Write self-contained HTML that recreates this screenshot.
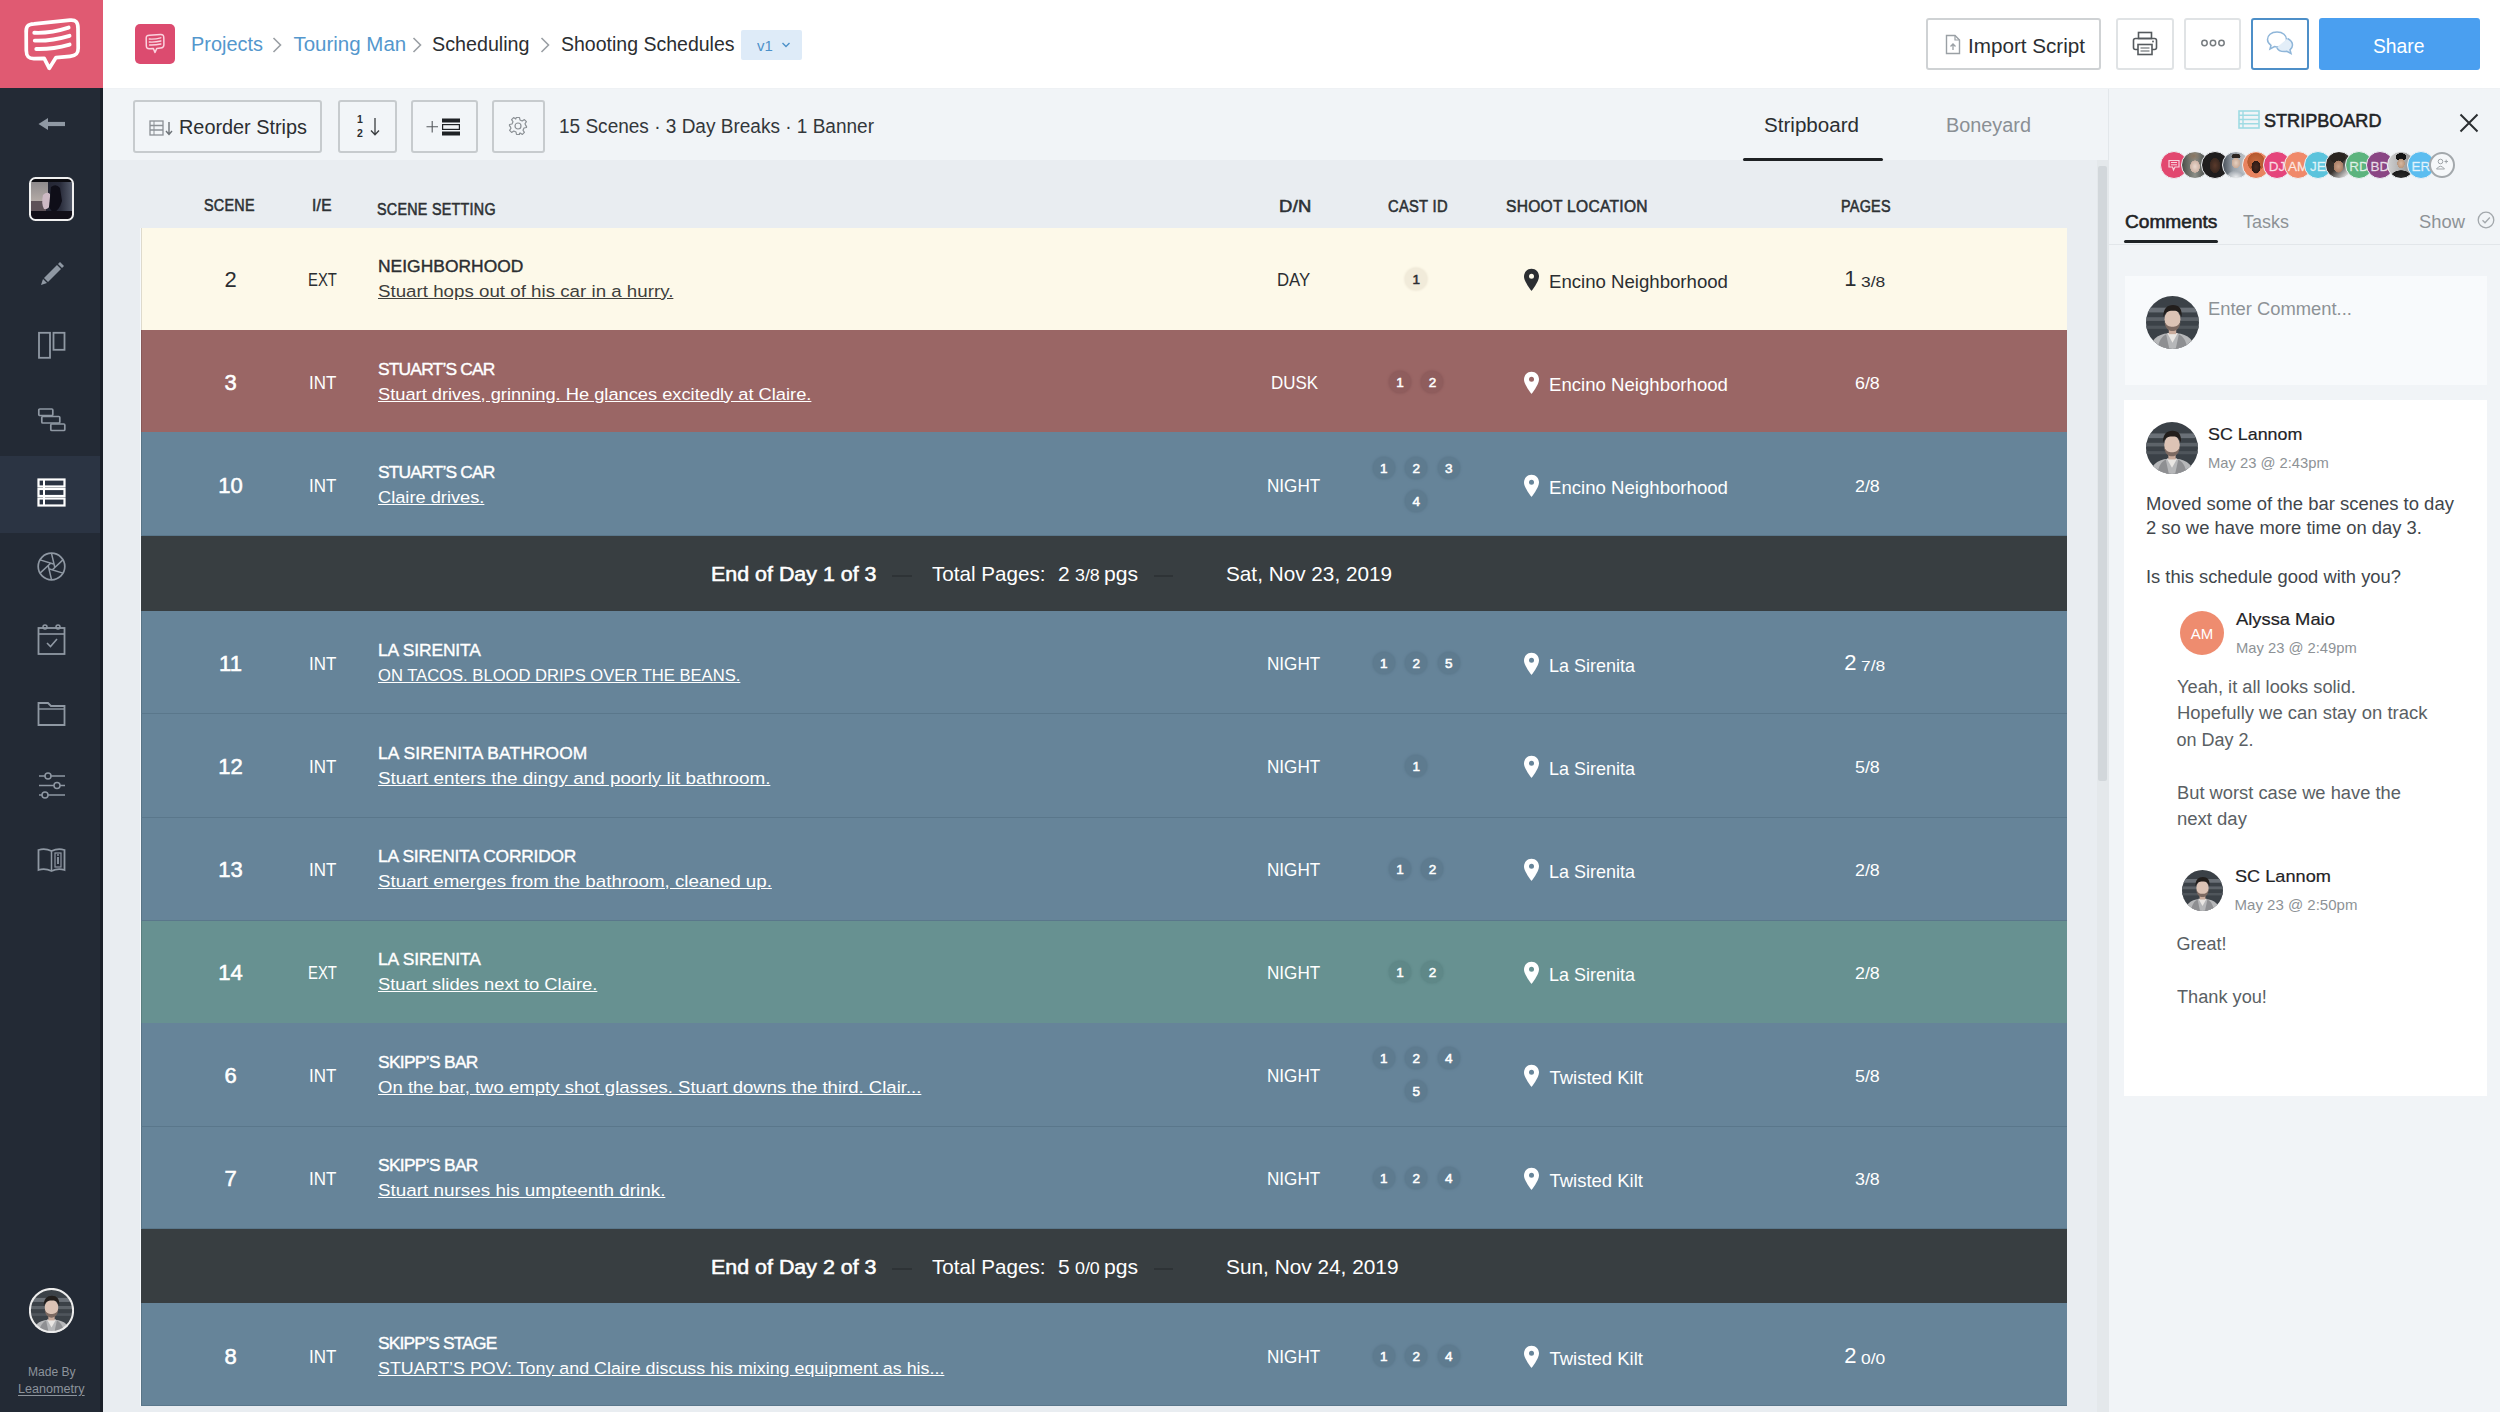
<!DOCTYPE html>
<html><head><meta charset="utf-8"><title>Stripboard</title>
<style>
html,body{margin:0;padding:0;width:2500px;height:1412px;overflow:hidden;font-family:"Liberation Sans", sans-serif;}
body{position:relative;}
</style></head><body>
<div style="position:absolute;left:0px;top:0px;width:2500px;height:1412px;background:#e9edf1"></div>
<div style="position:absolute;left:103px;top:0px;width:2397px;height:88px;background:#ffffff"></div>
<div style="position:absolute;left:103px;top:88px;width:2006px;height:72px;background:#f1f4f7"></div>
<div style="position:absolute;left:2109px;top:88px;width:391px;height:1324px;background:#f1f4f7"></div>
<div style="position:absolute;left:2108px;top:88px;width:1px;height:1324px;background:#e3e7eb"></div>
<div style="position:absolute;left:103px;top:88px;width:2397px;height:1px;background:#eef1f4"></div>
<div style="position:absolute;left:0px;top:0px;width:103px;height:1412px;background:#232a35"></div>
<div style="position:absolute;left:100px;top:88px;width:3px;height:1324px;background:#1b2029"></div>
<div style="position:absolute;left:0px;top:0px;width:103px;height:88px;background:#e05a72"></div>
<div style="position:absolute;left:0px;top:456px;width:100px;height:77px;background:#2b3443"></div>
<svg style="position:absolute;left:0px;top:0px" width="103" height="88" viewBox="0 0 103 88">
<path d="M26.2 33 C25.8 26.5 27.5 24.3 34 23.8 L70 20.2 C76 19.7 78 22.3 78 28.5 L78.2 48 C78.3 53.8 76 55.8 70 56.4 L56 57.6 L49.3 68.3 L44.2 58.4 L34 58.6 C28.2 58.7 26.4 56.2 26.3 50.5 Z" fill="none" stroke="#fff" stroke-width="3.7" stroke-linejoin="round"/>
<path d="M34.3 32.8 Q50 33.6 68.6 27.6" stroke="#fff" stroke-width="3.9" fill="none" stroke-linecap="round"/>
<path d="M34.8 40.6 Q51 41.2 69.5 35.8" stroke="#fff" stroke-width="3.9" fill="none" stroke-linecap="round"/>
<path d="M36.3 49 Q52 49.5 69.6 44.6" stroke="#fff" stroke-width="3.9" fill="none" stroke-linecap="round"/>
</svg>
<svg style="position:absolute;left:36px;top:114px" width="32" height="20" viewBox="0 0 32 20">
<path d="M29 10 L10 10" stroke="#8f98a3" stroke-width="4.2"/><path d="M12 4 L2.5 10 L12 16 Z" fill="#8f98a3"/></svg>
<svg style="position:absolute;left:29px;top:177px" width="45" height="44" viewBox="0 0 45 44">
<defs><clipPath id="thc"><rect x="2" y="2" width="41" height="40" rx="4"/></clipPath>
<linearGradient id="thr" x1="0" x2="1" y1="0" y2="0"><stop offset="0" stop-color="#1b1a26"/><stop offset="0.7" stop-color="#2a2d3c"/><stop offset="1" stop-color="#5b6272"/></linearGradient>
<linearGradient id="thl" x1="0" x2="0" y1="0" y2="1"><stop offset="0" stop-color="#8e8a8c"/><stop offset="1" stop-color="#b3aaa6"/></linearGradient></defs>
<g clip-path="url(#thc)">
<rect width="45" height="44" fill="url(#thr)"/>
<rect x="0" y="5" width="19" height="19" fill="url(#thl)"/>
<rect x="0" y="24" width="17" height="10" fill="#5e5258"/>
<path d="M14 18 Q18 14 21 17 L22 26 Q20 33 15 32 Q12 27 14 18 Z" fill="#cdb9c4"/>
<path d="M22 10 Q27 6 31 11 L33 24 Q30 34 24 36 L20 30 Z" fill="#0f0e18"/>
<rect x="0" y="34" width="45" height="10" fill="#120f18"/>
<rect x="0" y="2" width="45" height="3" fill="#0b0b10"/>
</g>
<rect x="1" y="1" width="43" height="42" rx="5.5" fill="none" stroke="#f0f0f0" stroke-width="2"/>
</svg>
<svg style="position:absolute;left:38px;top:259px" width="28" height="28" viewBox="0 0 28 28">
<path d="M6 19 L19 6 L23 10 L10 23 Z" fill="#8f98a3"/><path d="M20 5 L22 3 L26 7 L24 9 Z" fill="#8f98a3"/><path d="M5 20 L9 24 L3 26 Z" fill="#8f98a3"/></svg>
<svg style="position:absolute;left:37px;top:331px" width="30" height="29" viewBox="0 0 30 29">
<rect x="2" y="1.8" width="11" height="25" fill="none" stroke="#8f98a3" stroke-width="1.8"/><rect x="16.5" y="1.8" width="11" height="17" fill="none" stroke="#8f98a3" stroke-width="1.8"/></svg>
<svg style="position:absolute;left:37px;top:407px" width="30" height="26" viewBox="0 0 30 26">
<rect x="1.8" y="2" width="14" height="6.5" rx="1" fill="none" stroke="#8f98a3" stroke-width="1.7"/><rect x="4.8" y="9.5" width="18" height="6.5" rx="1" fill="none" stroke="#8f98a3" stroke-width="1.7"/><rect x="13.8" y="17" width="14" height="6.5" rx="1" fill="none" stroke="#8f98a3" stroke-width="1.7"/></svg>
<svg style="position:absolute;left:37px;top:478px" width="29" height="29" viewBox="0 0 29 29">
<rect x="1.5" y="1.5" width="26" height="7" fill="none" stroke="#fff" stroke-width="2.2"/><rect x="1.5" y="11" width="26" height="7" fill="none" stroke="#fff" stroke-width="2.2"/><rect x="1.5" y="20.5" width="26" height="7" fill="none" stroke="#fff" stroke-width="2.2"/>
<path d="M7 2 V28" stroke="#fff" stroke-width="2"/></svg>
<svg style="position:absolute;left:36px;top:551px" width="31" height="31" viewBox="0 0 31 31">
<circle cx="15.5" cy="15.5" r="13.3" fill="none" stroke="#8f98a3" stroke-width="1.7"/>
<path d="M15.50 2.30 L18.88 16.73 M26.93 8.90 L16.13 19.05 M26.93 22.10 L12.74 17.81 M15.50 28.70 L12.12 14.27 M4.07 22.10 L14.87 11.95 M4.07 8.90 L18.26 13.19" stroke="#8f98a3" stroke-width="1.5" fill="none"/></svg>
<svg style="position:absolute;left:37px;top:623px" width="30" height="33" viewBox="0 0 30 33">
<rect x="1.5" y="5" width="26" height="26" fill="none" stroke="#8f98a3" stroke-width="1.8"/><path d="M1.5 11 H27.5" stroke="#8f98a3" stroke-width="1.6"/>
<circle cx="8" cy="4" r="2" fill="none" stroke="#8f98a3" stroke-width="1.5"/><circle cx="21" cy="4" r="2" fill="none" stroke="#8f98a3" stroke-width="1.5"/>
<path d="M10 20 L13.5 23.5 L20 16" stroke="#8f98a3" stroke-width="1.6" fill="none"/></svg>
<svg style="position:absolute;left:37px;top:700px" width="30" height="28" viewBox="0 0 30 28">
<path d="M1.5 3 H11 L14 6 H27.5 V25 H1.5 Z" fill="none" stroke="#8f98a3" stroke-width="1.8"/><path d="M1.5 9 H27.5" stroke="#8f98a3" stroke-width="1.4"/></svg>
<svg style="position:absolute;left:37px;top:772px" width="30" height="29" viewBox="0 0 30 29">
<path d="M2 4 H28 M2 13.5 H28 M2 23 H28" stroke="#8f98a3" stroke-width="1.6"/>
<circle cx="11" cy="4" r="3" fill="#232a35" stroke="#8f98a3" stroke-width="1.5"/><circle cx="20" cy="13.5" r="3" fill="#232a35" stroke="#8f98a3" stroke-width="1.5"/><circle cx="8" cy="23" r="3" fill="#232a35" stroke="#8f98a3" stroke-width="1.5"/></svg>
<svg style="position:absolute;left:37px;top:847px" width="30" height="27" viewBox="0 0 30 27">
<path d="M1.5 3 Q8 1 14.5 4 Q21 1 27.5 3 V23 Q21 21 14.5 24 Q8 21 1.5 23 Z" fill="none" stroke="#8f98a3" stroke-width="1.8"/><path d="M14.5 4 V24" stroke="#8f98a3" stroke-width="1.5"/>
<rect x="18" y="6" width="6" height="14" fill="none" stroke="#8f98a3" stroke-width="1.2"/><path d="M21 10 V17" stroke="#8f98a3" stroke-width="1.8"/><circle cx="21" cy="8" r="0.9" fill="#8f98a3"/></svg>
<svg style="position:absolute;left:29px;top:1288px" width="45" height="45" viewBox="0 0 100 100">
<defs><clipPath id="fc1"><circle cx="50" cy="50" r="50"/></clipPath></defs>
<g clip-path="url(#fc1)">
<rect width="100" height="100" fill="#3b4147"/>
<rect x="0" y="22" width="100" height="9" fill="#6a7077"/><rect x="0" y="40" width="100" height="7" fill="#5d6369"/><rect x="0" y="56" width="100" height="6" fill="#4f555b"/>
<path d="M8 100 C10 78 28 70 50 70 C72 70 90 78 92 100 Z" fill="#b6b7b9"/>
<path d="M40 70 L50 88 L60 70 Z" fill="#e9e6e3"/>
<path d="M22 100 C24 84 30 76 38 72 L44 100 Z" fill="#8e8f92"/><path d="M78 100 C76 84 70 76 62 72 L56 100 Z" fill="#8e8f92"/>
<rect x="43" y="58" width="14" height="14" fill="#c9ab9c"/>
<ellipse cx="50" cy="44" rx="15" ry="19" fill="#dcc3b5"/>
<path d="M35 48 C36 60 42 66 50 66 C58 66 64 60 65 48 C62 56 56 58 50 58 C44 58 38 56 35 48 Z" fill="#7d6a62"/>
<path d="M33 40 C32 24 40 17 51 17 C62 17 69 24 67 40 C64 30 58 27 50 28 C42 28 36 31 33 40 Z" fill="#221e1c"/>
</g>
<circle cx="50" cy="50" r="48" fill="none" stroke="#ececec" stroke-width="4.44"/>
</svg>
<div style="position:absolute;left:27.6px;top:1366.4px;font-size:12.5px;line-height:12.5px;font-weight:400;color:#8d949c;white-space:pre;transform:scaleX(0.9652);transform-origin:0 0;">Made By</div>
<div style="position:absolute;left:17.6px;top:1382.9px;font-size:12.5px;line-height:12.5px;font-weight:400;color:#8d949c;white-space:pre;transform:scaleX(1.0092);transform-origin:0 0;text-decoration:underline;text-underline-offset:2px;">Leanometry</div>
<div style="position:absolute;left:135px;top:24px;width:40px;height:40px;background:#dc4b6f;border-radius:5px"></div>
<svg style="position:absolute;left:143px;top:32px" width="24" height="24" viewBox="0 0 24 24">
<path d="M3.2 6.5 C3 4 4 3.3 6.5 3.2 L17.5 2.6 C20 2.5 20.8 3.5 20.8 6 L20.9 12.5 C21 15 20 15.8 17.5 16 L13.8 16.4 L12 20.5 L10.4 16.6 L6.5 16.7 C4 16.8 3.3 15.8 3.3 13.5 Z" fill="none" stroke="#fbd3df" stroke-width="1.5" stroke-linejoin="round"/>
<path d="M6.3 7 Q12 7.4 17.8 5.8 M6.3 10 Q12 10.4 17.9 9 M6.6 13 Q12 13.3 17.9 12" stroke="#fbd3df" stroke-width="1.4" fill="none" stroke-linecap="round"/></svg>
<div style="position:absolute;left:190.9px;top:34.3px;font-size:20.5px;line-height:20.5px;font-weight:400;color:#5497cd;white-space:pre;transform:scaleX(0.9711);transform-origin:0 0;">Projects</div>
<div style="position:absolute;left:293.4px;top:34.3px;font-size:20.5px;line-height:20.5px;font-weight:400;color:#5497cd;white-space:pre;">Touring Man</div>
<div style="position:absolute;left:432.4px;top:34.3px;font-size:20.5px;line-height:20.5px;font-weight:400;color:#2b2e31;white-space:pre;transform:scaleX(0.9613);transform-origin:0 0;">Scheduling</div>
<div style="position:absolute;left:560.9px;top:34.3px;font-size:20.5px;line-height:20.5px;font-weight:400;color:#2b2e31;white-space:pre;transform:scaleX(0.9516);transform-origin:0 0;">Shooting Schedules</div>
<svg style="position:absolute;left:271px;top:36px" width="12" height="18" viewBox="0 0 12 18"><path d="M2.5 2 L9.5 9 L2.5 16" stroke="#9a9fa4" stroke-width="1.6" fill="none"/></svg>
<svg style="position:absolute;left:411px;top:36px" width="12" height="18" viewBox="0 0 12 18"><path d="M2.5 2 L9.5 9 L2.5 16" stroke="#9a9fa4" stroke-width="1.6" fill="none"/></svg>
<svg style="position:absolute;left:539px;top:36px" width="12" height="18" viewBox="0 0 12 18"><path d="M2.5 2 L9.5 9 L2.5 16" stroke="#9a9fa4" stroke-width="1.6" fill="none"/></svg>
<div style="position:absolute;left:741px;top:30px;width:61px;height:30px;background:#deebf8;border-radius:2px"></div>
<div style="position:absolute;left:756.5px;top:38.3px;font-size:15px;line-height:15px;font-weight:400;color:#4d91c9;white-space:pre;transform:scaleX(0.9941);transform-origin:0 0;">v1</div>
<svg style="position:absolute;left:781px;top:41px" width="10" height="8" viewBox="0 0 10 8"><path d="M1.5 2 L5 5.5 L8.5 2" stroke="#4d91c9" stroke-width="1.4" fill="none"/></svg>
<div style="position:absolute;left:1926px;top:18px;width:175px;height:52px;box-sizing:border-box;border:2px solid #d4d7d9;border-radius:3px;background:#fff;border-color:#cfd2d4"></div>
<svg style="position:absolute;left:1945px;top:34px" width="16" height="21" viewBox="0 0 16 21">
<path d="M1.5 1.5 H10 L14.5 6 V19.5 H1.5 Z" fill="none" stroke="#9aa0a5" stroke-width="1.4"/><path d="M10 1.5 V6 H14.5" fill="none" stroke="#9aa0a5" stroke-width="1.2"/>
<path d="M8 16 V10 M5.5 12.5 L8 10 L10.5 12.5" stroke="#9aa0a5" stroke-width="1.3" fill="none"/></svg>
<div style="position:absolute;left:1968.4px;top:35.2px;font-size:21px;line-height:21px;font-weight:400;color:#2b2e31;white-space:pre;transform:scaleX(0.9834);transform-origin:0 0;">Import Script</div>
<div style="position:absolute;left:2116px;top:18px;width:58px;height:52px;box-sizing:border-box;border:2px solid #d4d7d9;border-radius:3px;background:#fff;border-color:#e0e3e5"></div>
<svg style="position:absolute;left:2132px;top:31px" width="26" height="26" viewBox="0 0 26 26">
<rect x="6.5" y="1.5" width="13" height="6" fill="none" stroke="#555a5e" stroke-width="1.6"/><rect x="1.5" y="7.5" width="23" height="11" rx="2" fill="none" stroke="#555a5e" stroke-width="1.6"/>
<rect x="6" y="13.5" width="14" height="10" fill="#fff" stroke="#555a5e" stroke-width="1.6"/><path d="M8.5 17 H17.5 M8.5 20 H17.5" stroke="#555a5e" stroke-width="1.2"/><circle cx="21" cy="10.5" r="0.9" fill="#555a5e"/></svg>
<div style="position:absolute;left:2184px;top:18px;width:57px;height:52px;box-sizing:border-box;border:2px solid #d4d7d9;border-radius:3px;background:#fff;border-color:#e0e3e5"></div>
<svg style="position:absolute;left:2201px;top:38px" width="24" height="10" viewBox="0 0 24 10">
<circle cx="3.5" cy="5" r="2.7" fill="none" stroke="#777c80" stroke-width="1.5"/><circle cx="12" cy="5" r="2.7" fill="none" stroke="#777c80" stroke-width="1.5"/><circle cx="20.5" cy="5" r="2.7" fill="none" stroke="#777c80" stroke-width="1.5"/></svg>
<div style="position:absolute;left:2251px;top:18px;width:58px;height:52px;box-sizing:border-box;border:2px solid #4d8fc8;border-radius:3px;background:#fff;"></div>
<svg style="position:absolute;left:2266px;top:30px" width="28" height="26" viewBox="0 0 28 26">
<path d="M11 2 C5 2 1.5 5.5 1.5 9.5 C1.5 12 3 14 5 15.3 L4 19 L8.5 16.6 C9.3 16.8 10.1 16.9 11 16.9 C17 16.9 20.5 13.4 20.5 9.5 C20.5 5.5 17 2 11 2 Z" fill="none" stroke="#8fb6d9" stroke-width="1.5"/>
<path d="M21.5 8.5 C24.5 10 26.5 12.3 26.5 15 C26.5 17 25.5 18.6 24 19.8 L25 23.5 L20.8 21.3 C20 21.5 19.2 21.6 18.3 21.6 C14.5 21.6 11.8 20 10.8 17.5" fill="#e3eef8" stroke="#8fb6d9" stroke-width="1.5"/></svg>
<div style="position:absolute;left:2319px;top:18px;width:161px;height:52px;background:#4a9ff0;border-radius:3px"></div>
<div style="position:absolute;left:2373.4px;top:36.1px;font-size:20.5px;line-height:20.5px;font-weight:400;color:#ffffff;white-space:pre;transform:scaleX(0.9416);transform-origin:0 0;">Share</div>
<div style="position:absolute;left:133px;top:100px;width:189px;height:53px;box-sizing:border-box;border:2px solid #c7cbce;border-radius:3px;background:#f2f5f8;"></div>
<svg style="position:absolute;left:149px;top:119px" width="26" height="18" viewBox="0 0 26 18">
<rect x="1" y="2" width="13" height="14" fill="none" stroke="#8b9095" stroke-width="1.3"/><path d="M1 6.5 H14 M1 11 H14" stroke="#8b9095" stroke-width="1.3"/><path d="M5 2 V16" stroke="#8b9095" stroke-width="1"/>
<path d="M20 3 V15 M17 12 L20 15.5 L23 12" stroke="#6f7479" stroke-width="1.4" fill="none"/></svg>
<div style="position:absolute;left:179.4px;top:116.6px;font-size:20px;line-height:20px;font-weight:400;color:#2b2e31;white-space:pre;transform:scaleX(0.9927);transform-origin:0 0;">Reorder Strips</div>
<div style="position:absolute;left:338px;top:100px;width:59px;height:53px;box-sizing:border-box;border:2px solid #c7cbce;border-radius:3px;background:#f2f5f8;"></div>
<div style="position:absolute;left:356.9px;top:114.3px;font-size:10.5px;line-height:10.5px;font-weight:700;color:#2b2e31;white-space:pre;">1</div>
<div style="position:absolute;left:356.9px;top:128.1px;font-size:10.5px;line-height:10.5px;font-weight:700;color:#2b2e31;white-space:pre;">2</div>
<svg style="position:absolute;left:368.5px;top:117px" width="12" height="20" viewBox="0 0 12 20"><path d="M6 1 V17.5 M2 13.5 L6 17.8 L10 13.5" stroke="#3a3d40" stroke-width="1.3" fill="none"/></svg>
<div style="position:absolute;left:411px;top:100px;width:67px;height:53px;box-sizing:border-box;border:2px solid #c7cbce;border-radius:3px;background:#f2f5f8;"></div>
<svg style="position:absolute;left:425px;top:116px" width="38" height="22" viewBox="0 0 38 22">
<path d="M1.5 10.7 H13 M7.2 5 V16.5" stroke="#55595d" stroke-width="1.1"/><rect x="17" y="2.5" width="18" height="4" fill="#1f2226"/><rect x="17.6" y="8.6" width="16.8" height="4.8" fill="none" stroke="#1f2226" stroke-width="1.2"/><rect x="17" y="15.5" width="18" height="4" fill="#1f2226"/></svg>
<div style="position:absolute;left:492px;top:100px;width:53px;height:53px;box-sizing:border-box;border:2px solid #c7cbce;border-radius:3px;background:#f2f5f8;"></div>
<svg style="position:absolute;left:508px;top:116px" width="20" height="20" viewBox="0 0 20 20">
<path d="M8.5 1.5 H11.5 L12 4 L14.2 5 L16.4 3.6 L18.4 5.6 L17 7.8 L18 10 L18.5 10 V11.5 L16 12 L15 14.2 L16.4 16.4 L14.4 18.4 L12.2 17 L11.5 17.3 L11.5 18.5 H8.5 L8 16 L5.8 15 L3.6 16.4 L1.6 14.4 L3 12.2 L2 10 L1.5 10 V8.5 L4 8 L5 5.8 L3.6 3.6 L5.6 1.6 L7.8 3 L8 2 Z" fill="none" stroke="#8b9095" stroke-width="1.2" stroke-linejoin="round"/>
<circle cx="10" cy="10" r="3" fill="none" stroke="#8b9095" stroke-width="1.2"/></svg>
<div style="position:absolute;left:559.4px;top:115.7px;font-size:20px;line-height:20px;font-weight:400;color:#33373b;white-space:pre;transform:scaleX(0.9509);transform-origin:0 0;">15 Scenes · 3 Day Breaks · 1 Banner</div>
<div style="position:absolute;left:1764.4px;top:116.2px;font-size:19.5px;line-height:19.5px;font-weight:400;color:#2b2e31;white-space:pre;transform:scaleX(1.0556);transform-origin:0 0;">Stripboard</div>
<div style="position:absolute;left:1946.4px;top:116.2px;font-size:19.5px;line-height:19.5px;font-weight:400;color:#8a8f94;white-space:pre;transform:scaleX(1.0179);transform-origin:0 0;">Boneyard</div>
<div style="position:absolute;left:1743px;top:158px;width:140px;height:3px;background:#1e2124;border-radius:2px"></div>
<div style="position:absolute;left:203.5px;top:198.1px;font-size:16px;line-height:16px;font-weight:400;color:#2d3134;white-space:pre;transform:scaleX(0.8971);transform-origin:0 0;-webkit-text-stroke:0.55px #2d3134;letter-spacing:0.3px;">SCENE</div>
<div style="position:absolute;left:311.5px;top:198.1px;font-size:16px;line-height:16px;font-weight:400;color:#2d3134;white-space:pre;transform:scaleX(0.9673);transform-origin:0 0;-webkit-text-stroke:0.55px #2d3134;letter-spacing:0.3px;">I/E</div>
<div style="position:absolute;left:376.5px;top:202.1px;font-size:16px;line-height:16px;font-weight:400;color:#2d3134;white-space:pre;transform:scaleX(0.8945);transform-origin:0 0;-webkit-text-stroke:0.55px #2d3134;letter-spacing:0.3px;">SCENE SETTING</div>
<div style="position:absolute;left:1278.5px;top:199.2px;font-size:16px;line-height:16px;font-weight:400;color:#2d3134;white-space:pre;transform:scaleX(1.1521);transform-origin:0 0;-webkit-text-stroke:0.55px #2d3134;letter-spacing:0.3px;">D/N</div>
<div style="position:absolute;left:1387.5px;top:199.2px;font-size:16px;line-height:16px;font-weight:400;color:#2d3134;white-space:pre;transform:scaleX(0.9209);transform-origin:0 0;-webkit-text-stroke:0.55px #2d3134;letter-spacing:0.3px;">CAST ID</div>
<div style="position:absolute;left:1505.5px;top:199.2px;font-size:16px;line-height:16px;font-weight:400;color:#2d3134;white-space:pre;transform:scaleX(0.9722);transform-origin:0 0;-webkit-text-stroke:0.55px #2d3134;letter-spacing:0.3px;">SHOOT LOCATION</div>
<div style="position:absolute;left:1841.0px;top:199.2px;font-size:16px;line-height:16px;font-weight:400;color:#2d3134;white-space:pre;transform:scaleX(0.8981);transform-origin:0 0;-webkit-text-stroke:0.55px #2d3134;letter-spacing:0.3px;">PAGES</div>
<div style="position:absolute;left:140px;top:228px;width:1px;height:1178px;background:#f6f9fc"></div>
<div style="position:absolute;left:2097px;top:160px;width:12px;height:1252px;background:#e4e8eb"></div>
<div style="position:absolute;left:2098px;top:166px;width:9px;height:615px;background:#d2d7db;border-radius:2px"></div>
<div style="position:absolute;left:141px;top:228px;width:1926px;height:102px;background:#fdf9e9"></div>
<div style="position:absolute;left:141px;top:228px;width:1px;height:102px;background:rgba(0,0,0,0.12)"></div>
<div style="position:absolute;left:224.4px;top:269.4px;font-size:22px;line-height:22px;font-weight:400;color:#2b2e31;white-space:pre;">2</div>
<div style="position:absolute;left:308.4px;top:270.8px;font-size:18px;line-height:18px;font-weight:400;color:#2b2e31;white-space:pre;transform:scaleX(0.8253);transform-origin:0 0;">EXT</div>
<div style="position:absolute;left:378.0px;top:257.9px;font-size:17.4px;line-height:17.4px;font-weight:400;color:#2b2e31;white-space:pre;-webkit-text-stroke:0.4px #2b2e31;letter-spacing:0.039px;">NEIGHBORHOOD</div>
<div style="position:absolute;left:378.0px;top:282.7px;font-size:17.4px;line-height:17.4px;font-weight:400;color:#3f3f3c;white-space:pre;transform:scaleX(1.0772);transform-origin:0 0;text-decoration:underline;text-underline-offset:1.2px;">Stuart hops out of his car in a hurry.</div>
<div style="position:absolute;left:1277.4px;top:271.3px;font-size:18px;line-height:18px;font-weight:400;color:#2b2e31;white-space:pre;transform:scaleX(0.9303);transform-origin:0 0;">DAY</div>
<div style="position:absolute;left:1405.0px;top:268px;width:22px;height:22px;background:#f1ebda;border-radius:50%;box-shadow:0 0 2px 1px #f1ebda"></div>
<div style="position:absolute;left:1412.5px;top:272.6px;font-size:13.5px;line-height:13.5px;font-weight:400;color:#2b2e31;white-space:pre;-webkit-text-stroke:0.55px #2b2e31;">1</div>
<svg style="position:absolute;left:1523px;top:268px" width="17" height="24" viewBox="0 0 17 24">
<path d="M8.5 0.8 C4.2 0.8 1 4.1 1 8.6 C1 13.8 8.5 23 8.5 23 C8.5 23 16 13.8 16 8.6 C16 4.1 12.8 0.8 8.5 0.8 Z" fill="#2b2e31"/><circle cx="8.5" cy="8.3" r="2.5" fill="#fdf9e9"/></svg>
<div style="position:absolute;left:1549.4px;top:273.3px;font-size:18.5px;line-height:18.5px;font-weight:400;color:#2b2e31;white-space:pre;transform:scaleX(1.0055);transform-origin:0 0;">Encino Neighborhood</div>
<div style="position:absolute;left:1844.3px;top:267.9px;font-size:22px;line-height:22px;font-weight:400;color:#2b2e31;white-space:pre;">1</div>
<div style="position:absolute;left:1860.5px;top:274.1px;font-size:15px;line-height:15px;font-weight:400;color:#2b2e31;white-space:pre;transform:scaleX(1.1625);transform-origin:0 0;">3/8</div>
<div style="position:absolute;left:141px;top:330px;width:1926px;height:102px;background:#9a6665"></div>
<div style="position:absolute;left:141px;top:330px;width:1px;height:102px;background:rgba(0,0,0,0.12)"></div>
<div style="position:absolute;left:224.4px;top:372.4px;font-size:22px;line-height:22px;font-weight:400;color:#ffffff;white-space:pre;-webkit-text-stroke:0.55px #ffffff;">3</div>
<div style="position:absolute;left:309.2px;top:373.8px;font-size:18px;line-height:18px;font-weight:400;color:#ffffff;white-space:pre;transform:scaleX(0.9414);transform-origin:0 0;">INT</div>
<div style="position:absolute;left:378.0px;top:360.9px;font-size:17.4px;line-height:17.4px;font-weight:400;color:#ffffff;white-space:pre;-webkit-text-stroke:0.4px #ffffff;letter-spacing:-0.809px;">STUART’S CAR</div>
<div style="position:absolute;left:378.0px;top:385.7px;font-size:17.4px;line-height:17.4px;font-weight:400;color:#ffffff;white-space:pre;transform:scaleX(1.0500);transform-origin:0 0;text-decoration:underline;text-underline-offset:1.2px;">Stuart drives, grinning. He glances excitedly at Claire.</div>
<div style="position:absolute;left:1270.5px;top:374.3px;font-size:18px;line-height:18px;font-weight:400;color:#ffffff;white-space:pre;transform:scaleX(0.9417);transform-origin:0 0;">DUSK</div>
<div style="position:absolute;left:1388.75px;top:371px;width:22px;height:22px;background:#8f5d5d;border-radius:50%;box-shadow:0 0 2px 1px #8f5d5d"></div>
<div style="position:absolute;left:1396.3px;top:375.6px;font-size:13.5px;line-height:13.5px;font-weight:400;color:#ffffff;white-space:pre;-webkit-text-stroke:0.55px #ffffff;">1</div>
<div style="position:absolute;left:1421.25px;top:371px;width:22px;height:22px;background:#8f5d5d;border-radius:50%;box-shadow:0 0 2px 1px #8f5d5d"></div>
<div style="position:absolute;left:1428.8px;top:375.6px;font-size:13.5px;line-height:13.5px;font-weight:400;color:#ffffff;white-space:pre;-webkit-text-stroke:0.55px #ffffff;">2</div>
<svg style="position:absolute;left:1523px;top:371px" width="17" height="24" viewBox="0 0 17 24">
<path d="M8.5 0.8 C4.2 0.8 1 4.1 1 8.6 C1 13.8 8.5 23 8.5 23 C8.5 23 16 13.8 16 8.6 C16 4.1 12.8 0.8 8.5 0.8 Z" fill="#ffffff"/><circle cx="8.5" cy="8.3" r="2.5" fill="#9a6665"/></svg>
<div style="position:absolute;left:1549.4px;top:376.3px;font-size:18.5px;line-height:18.5px;font-weight:400;color:#ffffff;white-space:pre;transform:scaleX(1.0055);transform-origin:0 0;">Encino Neighborhood</div>
<div style="position:absolute;left:1854.5px;top:376.0px;font-size:16px;line-height:16px;font-weight:400;color:#ffffff;white-space:pre;transform:scaleX(1.1146);transform-origin:0 0;">6/8</div>
<div style="position:absolute;left:141px;top:432px;width:1926px;height:104px;background:#668499"></div>
<div style="position:absolute;left:141px;top:432px;width:1px;height:104px;background:rgba(0,0,0,0.12)"></div>
<div style="position:absolute;left:141px;top:535px;width:1926px;height:1px;background:#5a778b"></div>
<div style="position:absolute;left:218.3px;top:475.4px;font-size:22px;line-height:22px;font-weight:400;color:#ffffff;white-space:pre;-webkit-text-stroke:0.55px #ffffff;">10</div>
<div style="position:absolute;left:309.2px;top:476.8px;font-size:18px;line-height:18px;font-weight:400;color:#ffffff;white-space:pre;transform:scaleX(0.9414);transform-origin:0 0;">INT</div>
<div style="position:absolute;left:378.0px;top:463.9px;font-size:17.4px;line-height:17.4px;font-weight:400;color:#ffffff;white-space:pre;-webkit-text-stroke:0.4px #ffffff;letter-spacing:-0.809px;">STUART’S CAR</div>
<div style="position:absolute;left:378.0px;top:488.7px;font-size:17.4px;line-height:17.4px;font-weight:400;color:#ffffff;white-space:pre;transform:scaleX(1.0481);transform-origin:0 0;text-decoration:underline;text-underline-offset:1.2px;">Claire drives.</div>
<div style="position:absolute;left:1267.4px;top:477.3px;font-size:18px;line-height:18px;font-weight:400;color:#ffffff;white-space:pre;transform:scaleX(0.9500);transform-origin:0 0;">NIGHT</div>
<div style="position:absolute;left:1372.5px;top:457px;width:22px;height:22px;background:#5e7b8f;border-radius:50%;box-shadow:0 0 2px 1px #5e7b8f"></div>
<div style="position:absolute;left:1380.0px;top:461.6px;font-size:13.5px;line-height:13.5px;font-weight:400;color:#ffffff;white-space:pre;-webkit-text-stroke:0.55px #ffffff;">1</div>
<div style="position:absolute;left:1405.0px;top:457px;width:22px;height:22px;background:#5e7b8f;border-radius:50%;box-shadow:0 0 2px 1px #5e7b8f"></div>
<div style="position:absolute;left:1412.5px;top:461.6px;font-size:13.5px;line-height:13.5px;font-weight:400;color:#ffffff;white-space:pre;-webkit-text-stroke:0.55px #ffffff;">2</div>
<div style="position:absolute;left:1437.5px;top:457px;width:22px;height:22px;background:#5e7b8f;border-radius:50%;box-shadow:0 0 2px 1px #5e7b8f"></div>
<div style="position:absolute;left:1445.0px;top:461.6px;font-size:13.5px;line-height:13.5px;font-weight:400;color:#ffffff;white-space:pre;-webkit-text-stroke:0.55px #ffffff;">3</div>
<div style="position:absolute;left:1405.0px;top:490px;width:22px;height:22px;background:#5e7b8f;border-radius:50%;box-shadow:0 0 2px 1px #5e7b8f"></div>
<div style="position:absolute;left:1412.5px;top:494.6px;font-size:13.5px;line-height:13.5px;font-weight:400;color:#ffffff;white-space:pre;-webkit-text-stroke:0.55px #ffffff;">4</div>
<svg style="position:absolute;left:1523px;top:474px" width="17" height="24" viewBox="0 0 17 24">
<path d="M8.5 0.8 C4.2 0.8 1 4.1 1 8.6 C1 13.8 8.5 23 8.5 23 C8.5 23 16 13.8 16 8.6 C16 4.1 12.8 0.8 8.5 0.8 Z" fill="#ffffff"/><circle cx="8.5" cy="8.3" r="2.5" fill="#668499"/></svg>
<div style="position:absolute;left:1549.4px;top:479.3px;font-size:18.5px;line-height:18.5px;font-weight:400;color:#ffffff;white-space:pre;transform:scaleX(1.0055);transform-origin:0 0;">Encino Neighborhood</div>
<div style="position:absolute;left:1854.5px;top:479.0px;font-size:16px;line-height:16px;font-weight:400;color:#ffffff;white-space:pre;transform:scaleX(1.1146);transform-origin:0 0;">2/8</div>
<div style="position:absolute;left:141px;top:536px;width:1926px;height:75px;background:#383e41"></div>
<div style="position:absolute;left:710.9px;top:563.2px;font-size:21px;line-height:21px;font-weight:400;color:#ffffff;white-space:pre;transform:scaleX(1.0201);transform-origin:0 0;-webkit-text-stroke:0.55px #ffffff;">End of Day 1 of 3</div>
<div style="position:absolute;left:892px;top:575px;width:20px;height:2px;background:#2e3336"></div>
<div style="position:absolute;left:932.4px;top:563.2px;font-size:21px;line-height:21px;font-weight:400;color:#ffffff;white-space:pre;transform:scaleX(0.9825);transform-origin:0 0;">Total Pages:</div>
<div style="position:absolute;left:1057.9px;top:563.2px;font-size:21px;line-height:21px;font-weight:400;color:#ffffff;white-space:pre;">2</div>
<div style="position:absolute;left:1074.5px;top:567.5px;font-size:16px;line-height:16px;font-weight:400;color:#ffffff;white-space:pre;transform:scaleX(1.1146);transform-origin:0 0;">3/8</div>
<div style="position:absolute;left:1104.4px;top:563.2px;font-size:21px;line-height:21px;font-weight:400;color:#ffffff;white-space:pre;transform:scaleX(1.0056);transform-origin:0 0;">pgs</div>
<div style="position:absolute;left:1154px;top:575px;width:19px;height:2px;background:#2e3336"></div>
<div style="position:absolute;left:1226.4px;top:563.2px;font-size:21px;line-height:21px;font-weight:400;color:#ffffff;white-space:pre;transform:scaleX(0.9877);transform-origin:0 0;">Sat, Nov 23, 2019</div>
<div style="position:absolute;left:141px;top:611px;width:1926px;height:103px;background:#668499"></div>
<div style="position:absolute;left:141px;top:611px;width:1px;height:103px;background:rgba(0,0,0,0.12)"></div>
<div style="position:absolute;left:141px;top:713px;width:1926px;height:1px;background:#5a778b"></div>
<div style="position:absolute;left:219.1px;top:653.4px;font-size:22px;line-height:22px;font-weight:400;color:#ffffff;white-space:pre;-webkit-text-stroke:0.55px #ffffff;">11</div>
<div style="position:absolute;left:309.2px;top:654.8px;font-size:18px;line-height:18px;font-weight:400;color:#ffffff;white-space:pre;transform:scaleX(0.9414);transform-origin:0 0;">INT</div>
<div style="position:absolute;left:378.0px;top:641.9px;font-size:17.4px;line-height:17.4px;font-weight:400;color:#ffffff;white-space:pre;-webkit-text-stroke:0.4px #ffffff;letter-spacing:-0.119px;">LA SIRENITA</div>
<div style="position:absolute;left:378.0px;top:666.7px;font-size:17.4px;line-height:17.4px;font-weight:400;color:#ffffff;white-space:pre;transform:scaleX(0.9541);transform-origin:0 0;text-decoration:underline;text-underline-offset:1.2px;">ON TACOS. BLOOD DRIPS OVER THE BEANS.</div>
<div style="position:absolute;left:1267.4px;top:655.3px;font-size:18px;line-height:18px;font-weight:400;color:#ffffff;white-space:pre;transform:scaleX(0.9500);transform-origin:0 0;">NIGHT</div>
<div style="position:absolute;left:1372.5px;top:652px;width:22px;height:22px;background:#5e7b8f;border-radius:50%;box-shadow:0 0 2px 1px #5e7b8f"></div>
<div style="position:absolute;left:1380.0px;top:656.6px;font-size:13.5px;line-height:13.5px;font-weight:400;color:#ffffff;white-space:pre;-webkit-text-stroke:0.55px #ffffff;">1</div>
<div style="position:absolute;left:1405.0px;top:652px;width:22px;height:22px;background:#5e7b8f;border-radius:50%;box-shadow:0 0 2px 1px #5e7b8f"></div>
<div style="position:absolute;left:1412.5px;top:656.6px;font-size:13.5px;line-height:13.5px;font-weight:400;color:#ffffff;white-space:pre;-webkit-text-stroke:0.55px #ffffff;">2</div>
<div style="position:absolute;left:1437.5px;top:652px;width:22px;height:22px;background:#5e7b8f;border-radius:50%;box-shadow:0 0 2px 1px #5e7b8f"></div>
<div style="position:absolute;left:1445.0px;top:656.6px;font-size:13.5px;line-height:13.5px;font-weight:400;color:#ffffff;white-space:pre;-webkit-text-stroke:0.55px #ffffff;">5</div>
<svg style="position:absolute;left:1523px;top:652px" width="17" height="24" viewBox="0 0 17 24">
<path d="M8.5 0.8 C4.2 0.8 1 4.1 1 8.6 C1 13.8 8.5 23 8.5 23 C8.5 23 16 13.8 16 8.6 C16 4.1 12.8 0.8 8.5 0.8 Z" fill="#ffffff"/><circle cx="8.5" cy="8.3" r="2.5" fill="#668499"/></svg>
<div style="position:absolute;left:1549.4px;top:657.3px;font-size:18.5px;line-height:18.5px;font-weight:400;color:#ffffff;white-space:pre;transform:scaleX(0.9714);transform-origin:0 0;">La Sirenita</div>
<div style="position:absolute;left:1844.3px;top:651.9px;font-size:22px;line-height:22px;font-weight:400;color:#ffffff;white-space:pre;">2</div>
<div style="position:absolute;left:1860.5px;top:658.1px;font-size:15px;line-height:15px;font-weight:400;color:#ffffff;white-space:pre;transform:scaleX(1.1625);transform-origin:0 0;">7/8</div>
<div style="position:absolute;left:141px;top:714px;width:1926px;height:104px;background:#668499"></div>
<div style="position:absolute;left:141px;top:714px;width:1px;height:104px;background:rgba(0,0,0,0.12)"></div>
<div style="position:absolute;left:141px;top:817px;width:1926px;height:1px;background:#5a778b"></div>
<div style="position:absolute;left:218.3px;top:756.4px;font-size:22px;line-height:22px;font-weight:400;color:#ffffff;white-space:pre;-webkit-text-stroke:0.55px #ffffff;">12</div>
<div style="position:absolute;left:309.2px;top:757.8px;font-size:18px;line-height:18px;font-weight:400;color:#ffffff;white-space:pre;transform:scaleX(0.9414);transform-origin:0 0;">INT</div>
<div style="position:absolute;left:378.0px;top:744.9px;font-size:17.4px;line-height:17.4px;font-weight:400;color:#ffffff;white-space:pre;-webkit-text-stroke:0.4px #ffffff;letter-spacing:0.118px;">LA SIRENITA BATHROOM</div>
<div style="position:absolute;left:378.0px;top:769.7px;font-size:17.4px;line-height:17.4px;font-weight:400;color:#ffffff;white-space:pre;transform:scaleX(1.0853);transform-origin:0 0;text-decoration:underline;text-underline-offset:1.2px;">Stuart enters the dingy and poorly lit bathroom.</div>
<div style="position:absolute;left:1267.4px;top:758.3px;font-size:18px;line-height:18px;font-weight:400;color:#ffffff;white-space:pre;transform:scaleX(0.9500);transform-origin:0 0;">NIGHT</div>
<div style="position:absolute;left:1405.0px;top:755px;width:22px;height:22px;background:#5e7b8f;border-radius:50%;box-shadow:0 0 2px 1px #5e7b8f"></div>
<div style="position:absolute;left:1412.5px;top:759.6px;font-size:13.5px;line-height:13.5px;font-weight:400;color:#ffffff;white-space:pre;-webkit-text-stroke:0.55px #ffffff;">1</div>
<svg style="position:absolute;left:1523px;top:755px" width="17" height="24" viewBox="0 0 17 24">
<path d="M8.5 0.8 C4.2 0.8 1 4.1 1 8.6 C1 13.8 8.5 23 8.5 23 C8.5 23 16 13.8 16 8.6 C16 4.1 12.8 0.8 8.5 0.8 Z" fill="#ffffff"/><circle cx="8.5" cy="8.3" r="2.5" fill="#668499"/></svg>
<div style="position:absolute;left:1549.4px;top:760.3px;font-size:18.5px;line-height:18.5px;font-weight:400;color:#ffffff;white-space:pre;transform:scaleX(0.9714);transform-origin:0 0;">La Sirenita</div>
<div style="position:absolute;left:1854.5px;top:760.0px;font-size:16px;line-height:16px;font-weight:400;color:#ffffff;white-space:pre;transform:scaleX(1.1146);transform-origin:0 0;">5/8</div>
<div style="position:absolute;left:141px;top:818px;width:1926px;height:103px;background:#668499"></div>
<div style="position:absolute;left:141px;top:818px;width:1px;height:103px;background:rgba(0,0,0,0.12)"></div>
<div style="position:absolute;left:141px;top:920px;width:1926px;height:1px;background:#5a778b"></div>
<div style="position:absolute;left:218.3px;top:859.4px;font-size:22px;line-height:22px;font-weight:400;color:#ffffff;white-space:pre;-webkit-text-stroke:0.55px #ffffff;">13</div>
<div style="position:absolute;left:309.2px;top:860.8px;font-size:18px;line-height:18px;font-weight:400;color:#ffffff;white-space:pre;transform:scaleX(0.9414);transform-origin:0 0;">INT</div>
<div style="position:absolute;left:378.0px;top:847.9px;font-size:17.4px;line-height:17.4px;font-weight:400;color:#ffffff;white-space:pre;-webkit-text-stroke:0.4px #ffffff;letter-spacing:-0.223px;">LA SIRENITA CORRIDOR</div>
<div style="position:absolute;left:378.0px;top:872.7px;font-size:17.4px;line-height:17.4px;font-weight:400;color:#ffffff;white-space:pre;transform:scaleX(1.0779);transform-origin:0 0;text-decoration:underline;text-underline-offset:1.2px;">Stuart emerges from the bathroom, cleaned up.</div>
<div style="position:absolute;left:1267.4px;top:861.3px;font-size:18px;line-height:18px;font-weight:400;color:#ffffff;white-space:pre;transform:scaleX(0.9500);transform-origin:0 0;">NIGHT</div>
<div style="position:absolute;left:1388.75px;top:858px;width:22px;height:22px;background:#5e7b8f;border-radius:50%;box-shadow:0 0 2px 1px #5e7b8f"></div>
<div style="position:absolute;left:1396.3px;top:862.6px;font-size:13.5px;line-height:13.5px;font-weight:400;color:#ffffff;white-space:pre;-webkit-text-stroke:0.55px #ffffff;">1</div>
<div style="position:absolute;left:1421.25px;top:858px;width:22px;height:22px;background:#5e7b8f;border-radius:50%;box-shadow:0 0 2px 1px #5e7b8f"></div>
<div style="position:absolute;left:1428.8px;top:862.6px;font-size:13.5px;line-height:13.5px;font-weight:400;color:#ffffff;white-space:pre;-webkit-text-stroke:0.55px #ffffff;">2</div>
<svg style="position:absolute;left:1523px;top:858px" width="17" height="24" viewBox="0 0 17 24">
<path d="M8.5 0.8 C4.2 0.8 1 4.1 1 8.6 C1 13.8 8.5 23 8.5 23 C8.5 23 16 13.8 16 8.6 C16 4.1 12.8 0.8 8.5 0.8 Z" fill="#ffffff"/><circle cx="8.5" cy="8.3" r="2.5" fill="#668499"/></svg>
<div style="position:absolute;left:1549.4px;top:863.3px;font-size:18.5px;line-height:18.5px;font-weight:400;color:#ffffff;white-space:pre;transform:scaleX(0.9714);transform-origin:0 0;">La Sirenita</div>
<div style="position:absolute;left:1854.5px;top:863.0px;font-size:16px;line-height:16px;font-weight:400;color:#ffffff;white-space:pre;transform:scaleX(1.1146);transform-origin:0 0;">2/8</div>
<div style="position:absolute;left:141px;top:921px;width:1926px;height:102px;background:#679191"></div>
<div style="position:absolute;left:141px;top:921px;width:1px;height:102px;background:rgba(0,0,0,0.12)"></div>
<div style="position:absolute;left:218.3px;top:962.4px;font-size:22px;line-height:22px;font-weight:400;color:#ffffff;white-space:pre;-webkit-text-stroke:0.55px #ffffff;">14</div>
<div style="position:absolute;left:308.4px;top:963.8px;font-size:18px;line-height:18px;font-weight:400;color:#ffffff;white-space:pre;transform:scaleX(0.8253);transform-origin:0 0;">EXT</div>
<div style="position:absolute;left:378.0px;top:950.9px;font-size:17.4px;line-height:17.4px;font-weight:400;color:#ffffff;white-space:pre;-webkit-text-stroke:0.4px #ffffff;letter-spacing:-0.119px;">LA SIRENITA</div>
<div style="position:absolute;left:378.0px;top:975.7px;font-size:17.4px;line-height:17.4px;font-weight:400;color:#ffffff;white-space:pre;transform:scaleX(1.0555);transform-origin:0 0;text-decoration:underline;text-underline-offset:1.2px;">Stuart slides next to Claire.</div>
<div style="position:absolute;left:1267.4px;top:964.3px;font-size:18px;line-height:18px;font-weight:400;color:#ffffff;white-space:pre;transform:scaleX(0.9500);transform-origin:0 0;">NIGHT</div>
<div style="position:absolute;left:1388.75px;top:961px;width:22px;height:22px;background:#5f8888;border-radius:50%;box-shadow:0 0 2px 1px #5f8888"></div>
<div style="position:absolute;left:1396.3px;top:965.6px;font-size:13.5px;line-height:13.5px;font-weight:400;color:#ffffff;white-space:pre;-webkit-text-stroke:0.55px #ffffff;">1</div>
<div style="position:absolute;left:1421.25px;top:961px;width:22px;height:22px;background:#5f8888;border-radius:50%;box-shadow:0 0 2px 1px #5f8888"></div>
<div style="position:absolute;left:1428.8px;top:965.6px;font-size:13.5px;line-height:13.5px;font-weight:400;color:#ffffff;white-space:pre;-webkit-text-stroke:0.55px #ffffff;">2</div>
<svg style="position:absolute;left:1523px;top:961px" width="17" height="24" viewBox="0 0 17 24">
<path d="M8.5 0.8 C4.2 0.8 1 4.1 1 8.6 C1 13.8 8.5 23 8.5 23 C8.5 23 16 13.8 16 8.6 C16 4.1 12.8 0.8 8.5 0.8 Z" fill="#ffffff"/><circle cx="8.5" cy="8.3" r="2.5" fill="#679191"/></svg>
<div style="position:absolute;left:1549.4px;top:966.3px;font-size:18.5px;line-height:18.5px;font-weight:400;color:#ffffff;white-space:pre;transform:scaleX(0.9714);transform-origin:0 0;">La Sirenita</div>
<div style="position:absolute;left:1854.5px;top:966.0px;font-size:16px;line-height:16px;font-weight:400;color:#ffffff;white-space:pre;transform:scaleX(1.1146);transform-origin:0 0;">2/8</div>
<div style="position:absolute;left:141px;top:1023px;width:1926px;height:104px;background:#668499"></div>
<div style="position:absolute;left:141px;top:1023px;width:1px;height:104px;background:rgba(0,0,0,0.12)"></div>
<div style="position:absolute;left:141px;top:1126px;width:1926px;height:1px;background:#5a778b"></div>
<div style="position:absolute;left:224.4px;top:1065.4px;font-size:22px;line-height:22px;font-weight:400;color:#ffffff;white-space:pre;-webkit-text-stroke:0.55px #ffffff;">6</div>
<div style="position:absolute;left:309.2px;top:1066.8px;font-size:18px;line-height:18px;font-weight:400;color:#ffffff;white-space:pre;transform:scaleX(0.9414);transform-origin:0 0;">INT</div>
<div style="position:absolute;left:378.0px;top:1053.9px;font-size:17.4px;line-height:17.4px;font-weight:400;color:#ffffff;white-space:pre;-webkit-text-stroke:0.4px #ffffff;letter-spacing:-0.693px;">SKIPP’S BAR</div>
<div style="position:absolute;left:378.0px;top:1078.7px;font-size:17.4px;line-height:17.4px;font-weight:400;color:#ffffff;white-space:pre;transform:scaleX(1.0667);transform-origin:0 0;text-decoration:underline;text-underline-offset:1.2px;">On the bar, two empty shot glasses. Stuart downs the third. Clair...</div>
<div style="position:absolute;left:1267.4px;top:1067.3px;font-size:18px;line-height:18px;font-weight:400;color:#ffffff;white-space:pre;transform:scaleX(0.9500);transform-origin:0 0;">NIGHT</div>
<div style="position:absolute;left:1372.5px;top:1047px;width:22px;height:22px;background:#5e7b8f;border-radius:50%;box-shadow:0 0 2px 1px #5e7b8f"></div>
<div style="position:absolute;left:1380.0px;top:1051.6px;font-size:13.5px;line-height:13.5px;font-weight:400;color:#ffffff;white-space:pre;-webkit-text-stroke:0.55px #ffffff;">1</div>
<div style="position:absolute;left:1405.0px;top:1047px;width:22px;height:22px;background:#5e7b8f;border-radius:50%;box-shadow:0 0 2px 1px #5e7b8f"></div>
<div style="position:absolute;left:1412.5px;top:1051.6px;font-size:13.5px;line-height:13.5px;font-weight:400;color:#ffffff;white-space:pre;-webkit-text-stroke:0.55px #ffffff;">2</div>
<div style="position:absolute;left:1437.5px;top:1047px;width:22px;height:22px;background:#5e7b8f;border-radius:50%;box-shadow:0 0 2px 1px #5e7b8f"></div>
<div style="position:absolute;left:1445.0px;top:1051.6px;font-size:13.5px;line-height:13.5px;font-weight:400;color:#ffffff;white-space:pre;-webkit-text-stroke:0.55px #ffffff;">4</div>
<div style="position:absolute;left:1405.0px;top:1080px;width:22px;height:22px;background:#5e7b8f;border-radius:50%;box-shadow:0 0 2px 1px #5e7b8f"></div>
<div style="position:absolute;left:1412.5px;top:1084.6px;font-size:13.5px;line-height:13.5px;font-weight:400;color:#ffffff;white-space:pre;-webkit-text-stroke:0.55px #ffffff;">5</div>
<svg style="position:absolute;left:1523px;top:1064px" width="17" height="24" viewBox="0 0 17 24">
<path d="M8.5 0.8 C4.2 0.8 1 4.1 1 8.6 C1 13.8 8.5 23 8.5 23 C8.5 23 16 13.8 16 8.6 C16 4.1 12.8 0.8 8.5 0.8 Z" fill="#ffffff"/><circle cx="8.5" cy="8.3" r="2.5" fill="#668499"/></svg>
<div style="position:absolute;left:1549.4px;top:1069.3px;font-size:18.5px;line-height:18.5px;font-weight:400;color:#ffffff;white-space:pre;">Twisted Kilt</div>
<div style="position:absolute;left:1854.5px;top:1069.0px;font-size:16px;line-height:16px;font-weight:400;color:#ffffff;white-space:pre;transform:scaleX(1.1146);transform-origin:0 0;">5/8</div>
<div style="position:absolute;left:141px;top:1127px;width:1926px;height:102px;background:#668499"></div>
<div style="position:absolute;left:141px;top:1127px;width:1px;height:102px;background:rgba(0,0,0,0.12)"></div>
<div style="position:absolute;left:141px;top:1228px;width:1926px;height:1px;background:#5a778b"></div>
<div style="position:absolute;left:224.4px;top:1168.4px;font-size:22px;line-height:22px;font-weight:400;color:#ffffff;white-space:pre;-webkit-text-stroke:0.55px #ffffff;">7</div>
<div style="position:absolute;left:309.2px;top:1169.8px;font-size:18px;line-height:18px;font-weight:400;color:#ffffff;white-space:pre;transform:scaleX(0.9414);transform-origin:0 0;">INT</div>
<div style="position:absolute;left:378.0px;top:1156.9px;font-size:17.4px;line-height:17.4px;font-weight:400;color:#ffffff;white-space:pre;-webkit-text-stroke:0.4px #ffffff;letter-spacing:-0.693px;">SKIPP’S BAR</div>
<div style="position:absolute;left:378.0px;top:1181.7px;font-size:17.4px;line-height:17.4px;font-weight:400;color:#ffffff;white-space:pre;transform:scaleX(1.0850);transform-origin:0 0;text-decoration:underline;text-underline-offset:1.2px;">Stuart nurses his umpteenth drink.</div>
<div style="position:absolute;left:1267.4px;top:1170.3px;font-size:18px;line-height:18px;font-weight:400;color:#ffffff;white-space:pre;transform:scaleX(0.9500);transform-origin:0 0;">NIGHT</div>
<div style="position:absolute;left:1372.5px;top:1167px;width:22px;height:22px;background:#5e7b8f;border-radius:50%;box-shadow:0 0 2px 1px #5e7b8f"></div>
<div style="position:absolute;left:1380.0px;top:1171.6px;font-size:13.5px;line-height:13.5px;font-weight:400;color:#ffffff;white-space:pre;-webkit-text-stroke:0.55px #ffffff;">1</div>
<div style="position:absolute;left:1405.0px;top:1167px;width:22px;height:22px;background:#5e7b8f;border-radius:50%;box-shadow:0 0 2px 1px #5e7b8f"></div>
<div style="position:absolute;left:1412.5px;top:1171.6px;font-size:13.5px;line-height:13.5px;font-weight:400;color:#ffffff;white-space:pre;-webkit-text-stroke:0.55px #ffffff;">2</div>
<div style="position:absolute;left:1437.5px;top:1167px;width:22px;height:22px;background:#5e7b8f;border-radius:50%;box-shadow:0 0 2px 1px #5e7b8f"></div>
<div style="position:absolute;left:1445.0px;top:1171.6px;font-size:13.5px;line-height:13.5px;font-weight:400;color:#ffffff;white-space:pre;-webkit-text-stroke:0.55px #ffffff;">4</div>
<svg style="position:absolute;left:1523px;top:1167px" width="17" height="24" viewBox="0 0 17 24">
<path d="M8.5 0.8 C4.2 0.8 1 4.1 1 8.6 C1 13.8 8.5 23 8.5 23 C8.5 23 16 13.8 16 8.6 C16 4.1 12.8 0.8 8.5 0.8 Z" fill="#ffffff"/><circle cx="8.5" cy="8.3" r="2.5" fill="#668499"/></svg>
<div style="position:absolute;left:1549.4px;top:1172.3px;font-size:18.5px;line-height:18.5px;font-weight:400;color:#ffffff;white-space:pre;">Twisted Kilt</div>
<div style="position:absolute;left:1854.5px;top:1172.0px;font-size:16px;line-height:16px;font-weight:400;color:#ffffff;white-space:pre;transform:scaleX(1.1146);transform-origin:0 0;">3/8</div>
<div style="position:absolute;left:141px;top:1229px;width:1926px;height:74px;background:#383e41"></div>
<div style="position:absolute;left:710.9px;top:1256.2px;font-size:21px;line-height:21px;font-weight:400;color:#ffffff;white-space:pre;transform:scaleX(1.0201);transform-origin:0 0;-webkit-text-stroke:0.55px #ffffff;">End of Day 2 of 3</div>
<div style="position:absolute;left:892px;top:1268px;width:20px;height:2px;background:#2e3336"></div>
<div style="position:absolute;left:932.4px;top:1256.2px;font-size:21px;line-height:21px;font-weight:400;color:#ffffff;white-space:pre;transform:scaleX(0.9825);transform-origin:0 0;">Total Pages:</div>
<div style="position:absolute;left:1057.9px;top:1256.2px;font-size:21px;line-height:21px;font-weight:400;color:#ffffff;white-space:pre;">5</div>
<div style="position:absolute;left:1074.5px;top:1260.5px;font-size:16px;line-height:16px;font-weight:400;color:#ffffff;white-space:pre;transform:scaleX(1.1146);transform-origin:0 0;">0/0</div>
<div style="position:absolute;left:1104.4px;top:1256.2px;font-size:21px;line-height:21px;font-weight:400;color:#ffffff;white-space:pre;transform:scaleX(1.0056);transform-origin:0 0;">pgs</div>
<div style="position:absolute;left:1154px;top:1268px;width:19px;height:2px;background:#2e3336"></div>
<div style="position:absolute;left:1226.4px;top:1256.2px;font-size:21px;line-height:21px;font-weight:400;color:#ffffff;white-space:pre;transform:scaleX(0.9918);transform-origin:0 0;">Sun, Nov 24, 2019</div>
<div style="position:absolute;left:141px;top:1303px;width:1926px;height:103px;background:#668499"></div>
<div style="position:absolute;left:141px;top:1303px;width:1px;height:103px;background:rgba(0,0,0,0.12)"></div>
<div style="position:absolute;left:141px;top:1405px;width:1926px;height:1px;background:#5a778b"></div>
<div style="position:absolute;left:224.4px;top:1346.4px;font-size:22px;line-height:22px;font-weight:400;color:#ffffff;white-space:pre;-webkit-text-stroke:0.55px #ffffff;">8</div>
<div style="position:absolute;left:309.2px;top:1347.8px;font-size:18px;line-height:18px;font-weight:400;color:#ffffff;white-space:pre;transform:scaleX(0.9414);transform-origin:0 0;">INT</div>
<div style="position:absolute;left:378.0px;top:1334.9px;font-size:17.4px;line-height:17.4px;font-weight:400;color:#ffffff;white-space:pre;-webkit-text-stroke:0.4px #ffffff;letter-spacing:-0.818px;">SKIPP’S STAGE</div>
<div style="position:absolute;left:378.0px;top:1359.7px;font-size:17.4px;line-height:17.4px;font-weight:400;color:#ffffff;white-space:pre;transform:scaleX(1.0268);transform-origin:0 0;text-decoration:underline;text-underline-offset:1.2px;">STUART’S POV: Tony and Claire discuss his mixing equipment as his...</div>
<div style="position:absolute;left:1267.4px;top:1348.3px;font-size:18px;line-height:18px;font-weight:400;color:#ffffff;white-space:pre;transform:scaleX(0.9500);transform-origin:0 0;">NIGHT</div>
<div style="position:absolute;left:1372.5px;top:1345px;width:22px;height:22px;background:#5e7b8f;border-radius:50%;box-shadow:0 0 2px 1px #5e7b8f"></div>
<div style="position:absolute;left:1380.0px;top:1349.6px;font-size:13.5px;line-height:13.5px;font-weight:400;color:#ffffff;white-space:pre;-webkit-text-stroke:0.55px #ffffff;">1</div>
<div style="position:absolute;left:1405.0px;top:1345px;width:22px;height:22px;background:#5e7b8f;border-radius:50%;box-shadow:0 0 2px 1px #5e7b8f"></div>
<div style="position:absolute;left:1412.5px;top:1349.6px;font-size:13.5px;line-height:13.5px;font-weight:400;color:#ffffff;white-space:pre;-webkit-text-stroke:0.55px #ffffff;">2</div>
<div style="position:absolute;left:1437.5px;top:1345px;width:22px;height:22px;background:#5e7b8f;border-radius:50%;box-shadow:0 0 2px 1px #5e7b8f"></div>
<div style="position:absolute;left:1445.0px;top:1349.6px;font-size:13.5px;line-height:13.5px;font-weight:400;color:#ffffff;white-space:pre;-webkit-text-stroke:0.55px #ffffff;">4</div>
<svg style="position:absolute;left:1523px;top:1345px" width="17" height="24" viewBox="0 0 17 24">
<path d="M8.5 0.8 C4.2 0.8 1 4.1 1 8.6 C1 13.8 8.5 23 8.5 23 C8.5 23 16 13.8 16 8.6 C16 4.1 12.8 0.8 8.5 0.8 Z" fill="#ffffff"/><circle cx="8.5" cy="8.3" r="2.5" fill="#668499"/></svg>
<div style="position:absolute;left:1549.4px;top:1350.3px;font-size:18.5px;line-height:18.5px;font-weight:400;color:#ffffff;white-space:pre;">Twisted Kilt</div>
<div style="position:absolute;left:1844.3px;top:1344.9px;font-size:22px;line-height:22px;font-weight:400;color:#ffffff;white-space:pre;">2</div>
<div style="position:absolute;left:1860.5px;top:1351.1px;font-size:15px;line-height:15px;font-weight:400;color:#ffffff;white-space:pre;transform:scaleX(1.1625);transform-origin:0 0;">0/0</div>
<svg style="position:absolute;left:2238px;top:110px" width="22" height="19" viewBox="0 0 22 19">
<rect x="1" y="1" width="20" height="17" fill="none" stroke="#9fdbe3" stroke-width="1.6"/><path d="M1 5.2 H21 M1 9.5 H21 M1 13.8 H21 M5 1 V18" stroke="#9fdbe3" stroke-width="1.4"/></svg>
<div style="position:absolute;left:2264.4px;top:110.6px;font-size:19px;line-height:19px;font-weight:400;color:#1f2326;white-space:pre;transform:scaleX(0.9508);transform-origin:0 0;-webkit-text-stroke:0.55px #1f2326;">STRIPBOARD</div>
<svg style="position:absolute;left:2459px;top:113px" width="20" height="20" viewBox="0 0 20 20"><path d="M1.5 1.5 L18.5 18.5 M18.5 1.5 L1.5 18.5" stroke="#2b2e31" stroke-width="2"/></svg>
<div style="position:absolute;left:2160px;top:151px;width:28px;height:28px;box-sizing:border-box;border-radius:50%;border:1px solid #eef1f4;background:#e2476f"></div>
<svg style="position:absolute;left:2167px;top:158px" width="14" height="14" viewBox="0 0 14 14"><path d="M2 2.5 H12 V9 H8 L6.5 12 L5.5 9 H2 Z" fill="none" stroke="#f8d0dc" stroke-width="1.2"/><path d="M4 4.5 H10 M4 6.8 H10" stroke="#f8d0dc" stroke-width="1"/></svg>
<div style="position:absolute;left:2181px;top:151px;width:28px;height:28px;box-sizing:border-box;border-radius:50%;border:1px solid #eef1f4;background:radial-gradient(ellipse 30% 38% at 50% 56%, #ead8ce 0%, #cdb3a5 60%, transparent 64%),radial-gradient(ellipse 40% 30% at 45% 15%, #8a7560, transparent 70%),linear-gradient(90deg, #4a4e48, #8d8f88 50%, #3d4040)"></div>
<div style="position:absolute;left:2201px;top:151px;width:28px;height:28px;box-sizing:border-box;border-radius:50%;border:1px solid #eef1f4;background:radial-gradient(ellipse 28% 40% at 50% 52%, #5a3a2c 0%, #3a2820 70%, transparent 74%),#1f1d1e"></div>
<div style="position:absolute;left:2222px;top:151px;width:28px;height:28px;box-sizing:border-box;border-radius:50%;border:1px solid #eef1f4;background:radial-gradient(ellipse 22% 28% at 50% 42%, #e6d0c0 0%, #c9ab98 70%, transparent 74%),radial-gradient(ellipse 24% 14% at 50% 16%, #2b2521 0, #2b2521 70%, transparent 74%),radial-gradient(ellipse 50% 34% at 50% 96%, #e8eaec 0%, #a9afb6 60%, transparent 74%),linear-gradient(90deg, #4a525c, #9aa2aa 40%, #c8ccd0)"></div>
<div style="position:absolute;left:2242px;top:151px;width:28px;height:28px;box-sizing:border-box;border-radius:50%;border:1px solid #eef1f4;background:radial-gradient(ellipse 24% 34% at 50% 58%, #4a2a20 0%, #2e1a14 70%, transparent 74%),radial-gradient(ellipse 46% 48% at 50% 38%, #c86a40 0%, #b55a30 70%, transparent 74%),#e8835f"></div>
<div style="position:absolute;left:2263px;top:151px;width:28px;height:28px;box-sizing:border-box;border-radius:50%;border:1px solid #eef1f4;background:#e5457c"></div>
<div style="position:absolute;left:2268.8px;top:159.6px;font-size:13.5px;line-height:13.5px;font-weight:400;color:rgba(255,255,255,0.75);white-space:pre;-webkit-text-stroke:0.3px rgba(255,255,255,0.6);">DJ</div>
<div style="position:absolute;left:2284px;top:151px;width:28px;height:28px;box-sizing:border-box;border-radius:50%;border:1px solid #eef1f4;background:#f0896a"></div>
<div style="position:absolute;left:2287.9px;top:159.6px;font-size:13.5px;line-height:13.5px;font-weight:400;color:rgba(255,255,255,0.75);white-space:pre;-webkit-text-stroke:0.3px rgba(255,255,255,0.6);">AM</div>
<div style="position:absolute;left:2304px;top:151px;width:28px;height:28px;box-sizing:border-box;border-radius:50%;border:1px solid #eef1f4;background:#5bc3dc"></div>
<div style="position:absolute;left:2310.1px;top:159.6px;font-size:13.5px;line-height:13.5px;font-weight:400;color:rgba(255,255,255,0.75);white-space:pre;-webkit-text-stroke:0.3px rgba(255,255,255,0.6);">JE</div>
<div style="position:absolute;left:2325px;top:151px;width:28px;height:28px;box-sizing:border-box;border-radius:50%;border:1px solid #eef1f4;background:radial-gradient(ellipse 26% 32% at 48% 56%, #c9a088 0%, #a97e66 70%, transparent 74%),radial-gradient(ellipse 42% 28% at 45% 22%, #2a2420 0, #2a2420 70%, transparent 74%),linear-gradient(135deg, #2a2420, #3a3430 50%, #d8d8d8 85%)"></div>
<div style="position:absolute;left:2345px;top:151px;width:28px;height:28px;box-sizing:border-box;border-radius:50%;border:1px solid #eef1f4;background:#5cb47e"></div>
<div style="position:absolute;left:2349.2px;top:159.6px;font-size:13.5px;line-height:13.5px;font-weight:400;color:rgba(255,255,255,0.75);white-space:pre;-webkit-text-stroke:0.3px rgba(255,255,255,0.6);">RD</div>
<div style="position:absolute;left:2366px;top:151px;width:28px;height:28px;box-sizing:border-box;border-radius:50%;border:1px solid #eef1f4;background:#8a4684"></div>
<div style="position:absolute;left:2370.6px;top:159.6px;font-size:13.5px;line-height:13.5px;font-weight:400;color:rgba(255,255,255,0.75);white-space:pre;-webkit-text-stroke:0.3px rgba(255,255,255,0.6);">BD</div>
<div style="position:absolute;left:2387px;top:151px;width:28px;height:28px;box-sizing:border-box;border-radius:50%;border:1px solid #eef1f4;background:radial-gradient(ellipse 20% 26% at 50% 44%, #d8b8a0 0%, #b89880 70%, transparent 74%),radial-gradient(ellipse 28% 22% at 50% 20%, #141414 0, #141414 70%, transparent 74%),radial-gradient(ellipse 55% 38% at 50% 98%, #2a2a2a 0%, #1a1a1a 70%, transparent 74%),linear-gradient(90deg,#d0d0d0,#8e8e8e)"></div>
<div style="position:absolute;left:2407px;top:151px;width:28px;height:28px;box-sizing:border-box;border-radius:50%;border:1px solid #eef1f4;background:#5bbdf0"></div>
<div style="position:absolute;left:2411.6px;top:159.6px;font-size:13.5px;line-height:13.5px;font-weight:400;color:rgba(255,255,255,0.75);white-space:pre;-webkit-text-stroke:0.3px rgba(255,255,255,0.6);">ER</div>
<div style="position:absolute;left:2429px;top:152px;width:26px;height:26px;box-sizing:border-box;border-radius:50%;border:2px solid #a3a8ac;background:#f6f8fa"></div>
<svg style="position:absolute;left:2435px;top:158px" width="14" height="12" viewBox="0 0 14 12"><circle cx="5.5" cy="3.5" r="2.3" fill="none" stroke="#9fa4a8" stroke-width="1"/><path d="M1.5 11 Q5.5 5.5 9.5 11 Z" fill="none" stroke="#9fa4a8" stroke-width="1"/><path d="M9.5 3.5 H13 M11.2 1.7 V5.3" stroke="#9fa4a8" stroke-width="1"/></svg>
<div style="position:absolute;left:2125.0px;top:213.7px;font-size:17.5px;line-height:17.5px;font-weight:400;color:#1f2326;white-space:pre;transform:scaleX(1.0918);transform-origin:0 0;-webkit-text-stroke:0.55px #1f2326;">Comments</div>
<div style="position:absolute;left:2242.5px;top:213.7px;font-size:17.5px;line-height:17.5px;font-weight:400;color:#8d9296;white-space:pre;transform:scaleX(1.0255);transform-origin:0 0;">Tasks</div>
<div style="position:absolute;left:2418.5px;top:213.7px;font-size:17.5px;line-height:17.5px;font-weight:400;color:#8d9296;white-space:pre;transform:scaleX(1.0478);transform-origin:0 0;">Show</div>
<svg style="position:absolute;left:2477px;top:211px" width="18" height="18" viewBox="0 0 18 18"><circle cx="9" cy="9" r="7.8" fill="none" stroke="#a3a8ac" stroke-width="1.3"/><path d="M5.5 9.3 L8 11.8 L12.8 6.5" stroke="#a3a8ac" stroke-width="1.3" fill="none"/></svg>
<div style="position:absolute;left:2109px;top:244px;width:391px;height:1px;background:#e2e6ea"></div>
<div style="position:absolute;left:2124px;top:240px;width:94px;height:3px;background:#1f2326;border-radius:2px"></div>
<div style="position:absolute;left:2125px;top:276px;width:362px;height:109px;background:#f8fafc"></div>
<svg style="position:absolute;left:2146px;top:296px" width="53" height="53" viewBox="0 0 100 100">
<defs><clipPath id="fc2"><circle cx="50" cy="50" r="50"/></clipPath></defs>
<g clip-path="url(#fc2)">
<rect width="100" height="100" fill="#3b4147"/>
<rect x="0" y="22" width="100" height="9" fill="#6a7077"/><rect x="0" y="40" width="100" height="7" fill="#5d6369"/><rect x="0" y="56" width="100" height="6" fill="#4f555b"/>
<path d="M8 100 C10 78 28 70 50 70 C72 70 90 78 92 100 Z" fill="#b6b7b9"/>
<path d="M40 70 L50 88 L60 70 Z" fill="#e9e6e3"/>
<path d="M22 100 C24 84 30 76 38 72 L44 100 Z" fill="#8e8f92"/><path d="M78 100 C76 84 70 76 62 72 L56 100 Z" fill="#8e8f92"/>
<rect x="43" y="58" width="14" height="14" fill="#c9ab9c"/>
<ellipse cx="50" cy="44" rx="15" ry="19" fill="#dcc3b5"/>
<path d="M35 48 C36 60 42 66 50 66 C58 66 64 60 65 48 C62 56 56 58 50 58 C44 58 38 56 35 48 Z" fill="#7d6a62"/>
<path d="M33 40 C32 24 40 17 51 17 C62 17 69 24 67 40 C64 30 58 27 50 28 C42 28 36 31 33 40 Z" fill="#221e1c"/>
</g>

</svg>
<div style="position:absolute;left:2207.5px;top:299.8px;font-size:18px;line-height:18px;font-weight:400;color:#8d9296;white-space:pre;transform:scaleX(1.0202);transform-origin:0 0;">Enter Comment...</div>
<div style="position:absolute;left:2124px;top:400px;width:363px;height:696px;background:#ffffff"></div>
<svg style="position:absolute;left:2146px;top:422px" width="52" height="52" viewBox="0 0 100 100">
<defs><clipPath id="fc3"><circle cx="50" cy="50" r="50"/></clipPath></defs>
<g clip-path="url(#fc3)">
<rect width="100" height="100" fill="#3b4147"/>
<rect x="0" y="22" width="100" height="9" fill="#6a7077"/><rect x="0" y="40" width="100" height="7" fill="#5d6369"/><rect x="0" y="56" width="100" height="6" fill="#4f555b"/>
<path d="M8 100 C10 78 28 70 50 70 C72 70 90 78 92 100 Z" fill="#b6b7b9"/>
<path d="M40 70 L50 88 L60 70 Z" fill="#e9e6e3"/>
<path d="M22 100 C24 84 30 76 38 72 L44 100 Z" fill="#8e8f92"/><path d="M78 100 C76 84 70 76 62 72 L56 100 Z" fill="#8e8f92"/>
<rect x="43" y="58" width="14" height="14" fill="#c9ab9c"/>
<ellipse cx="50" cy="44" rx="15" ry="19" fill="#dcc3b5"/>
<path d="M35 48 C36 60 42 66 50 66 C58 66 64 60 65 48 C62 56 56 58 50 58 C44 58 38 56 35 48 Z" fill="#7d6a62"/>
<path d="M33 40 C32 24 40 17 51 17 C62 17 69 24 67 40 C64 30 58 27 50 28 C42 28 36 31 33 40 Z" fill="#221e1c"/>
</g>

</svg>
<div style="position:absolute;left:2207.5px;top:425.6px;font-size:17px;line-height:17px;font-weight:400;color:#1f2326;white-space:pre;transform:scaleX(1.0509);transform-origin:0 0;-webkit-text-stroke:0.2px #1f2326;">SC Lannom</div>
<div style="position:absolute;left:2207.6px;top:454.8px;font-size:15px;line-height:15px;font-weight:400;color:#8d9296;white-space:pre;transform:scaleX(0.9833);transform-origin:0 0;">May 23 @ 2:43pm</div>
<div style="position:absolute;left:2145.5px;top:494.8px;font-size:18px;line-height:18px;font-weight:400;color:#41464b;white-space:pre;transform:scaleX(1.0257);transform-origin:0 0;">Moved some of the bar scenes to day</div>
<div style="position:absolute;left:2145.5px;top:519.3px;font-size:18px;line-height:18px;font-weight:400;color:#41464b;white-space:pre;transform:scaleX(1.0213);transform-origin:0 0;">2 so we have more time on day 3.</div>
<div style="position:absolute;left:2145.5px;top:567.8px;font-size:18px;line-height:18px;font-weight:400;color:#41464b;white-space:pre;transform:scaleX(1.0190);transform-origin:0 0;">Is this schedule good with you?</div>
<div style="position:absolute;left:2180px;top:611px;width:44px;height:44px;background:#ee8c6f;border-radius:50%"></div>
<div style="position:absolute;left:2190.8px;top:626.3px;font-size:15px;line-height:15px;font-weight:400;color:#ffffff;white-space:pre;">AM</div>
<div style="position:absolute;left:2235.5px;top:611.4px;font-size:17px;line-height:17px;font-weight:400;color:#1f2326;white-space:pre;transform:scaleX(1.0787);transform-origin:0 0;-webkit-text-stroke:0.2px #1f2326;">Alyssa Maio</div>
<div style="position:absolute;left:2235.6px;top:639.8px;font-size:15px;line-height:15px;font-weight:400;color:#8d9296;white-space:pre;transform:scaleX(0.9833);transform-origin:0 0;">May 23 @ 2:49pm</div>
<div style="position:absolute;left:2176.5px;top:677.8px;font-size:18px;line-height:18px;font-weight:400;color:#5a5f64;white-space:pre;transform:scaleX(1.0139);transform-origin:0 0;">Yeah, it all looks solid.</div>
<div style="position:absolute;left:2176.5px;top:703.8px;font-size:18px;line-height:18px;font-weight:400;color:#5a5f64;white-space:pre;transform:scaleX(1.0257);transform-origin:0 0;">Hopefully we can stay on track</div>
<div style="position:absolute;left:2176.5px;top:730.6px;font-size:18px;line-height:18px;font-weight:400;color:#5a5f64;white-space:pre;">on Day 2.</div>
<div style="position:absolute;left:2176.5px;top:783.8px;font-size:18px;line-height:18px;font-weight:400;color:#5a5f64;white-space:pre;transform:scaleX(1.0171);transform-origin:0 0;">But worst case we have the</div>
<div style="position:absolute;left:2176.5px;top:810.2px;font-size:18px;line-height:18px;font-weight:400;color:#5a5f64;white-space:pre;transform:scaleX(1.0272);transform-origin:0 0;">next day</div>
<svg style="position:absolute;left:2182px;top:870px" width="41" height="41" viewBox="0 0 100 100">
<defs><clipPath id="fc4"><circle cx="50" cy="50" r="50"/></clipPath></defs>
<g clip-path="url(#fc4)">
<rect width="100" height="100" fill="#3b4147"/>
<rect x="0" y="22" width="100" height="9" fill="#6a7077"/><rect x="0" y="40" width="100" height="7" fill="#5d6369"/><rect x="0" y="56" width="100" height="6" fill="#4f555b"/>
<path d="M8 100 C10 78 28 70 50 70 C72 70 90 78 92 100 Z" fill="#b6b7b9"/>
<path d="M40 70 L50 88 L60 70 Z" fill="#e9e6e3"/>
<path d="M22 100 C24 84 30 76 38 72 L44 100 Z" fill="#8e8f92"/><path d="M78 100 C76 84 70 76 62 72 L56 100 Z" fill="#8e8f92"/>
<rect x="43" y="58" width="14" height="14" fill="#c9ab9c"/>
<ellipse cx="50" cy="44" rx="15" ry="19" fill="#dcc3b5"/>
<path d="M35 48 C36 60 42 66 50 66 C58 66 64 60 65 48 C62 56 56 58 50 58 C44 58 38 56 35 48 Z" fill="#7d6a62"/>
<path d="M33 40 C32 24 40 17 51 17 C62 17 69 24 67 40 C64 30 58 27 50 28 C42 28 36 31 33 40 Z" fill="#221e1c"/>
</g>

</svg>
<div style="position:absolute;left:2234.5px;top:867.6px;font-size:17px;line-height:17px;font-weight:400;color:#1f2326;white-space:pre;transform:scaleX(1.0676);transform-origin:0 0;-webkit-text-stroke:0.2px #1f2326;">SC Lannom</div>
<div style="position:absolute;left:2234.6px;top:897.3px;font-size:15px;line-height:15px;font-weight:400;color:#8d9296;white-space:pre;">May 23 @ 2:50pm</div>
<div style="position:absolute;left:2176.5px;top:934.5px;font-size:18px;line-height:18px;font-weight:400;color:#5a5f64;white-space:pre;">Great!</div>
<div style="position:absolute;left:2176.5px;top:987.8px;font-size:18px;line-height:18px;font-weight:400;color:#5a5f64;white-space:pre;transform:scaleX(1.0094);transform-origin:0 0;">Thank you!</div>
</body></html>
